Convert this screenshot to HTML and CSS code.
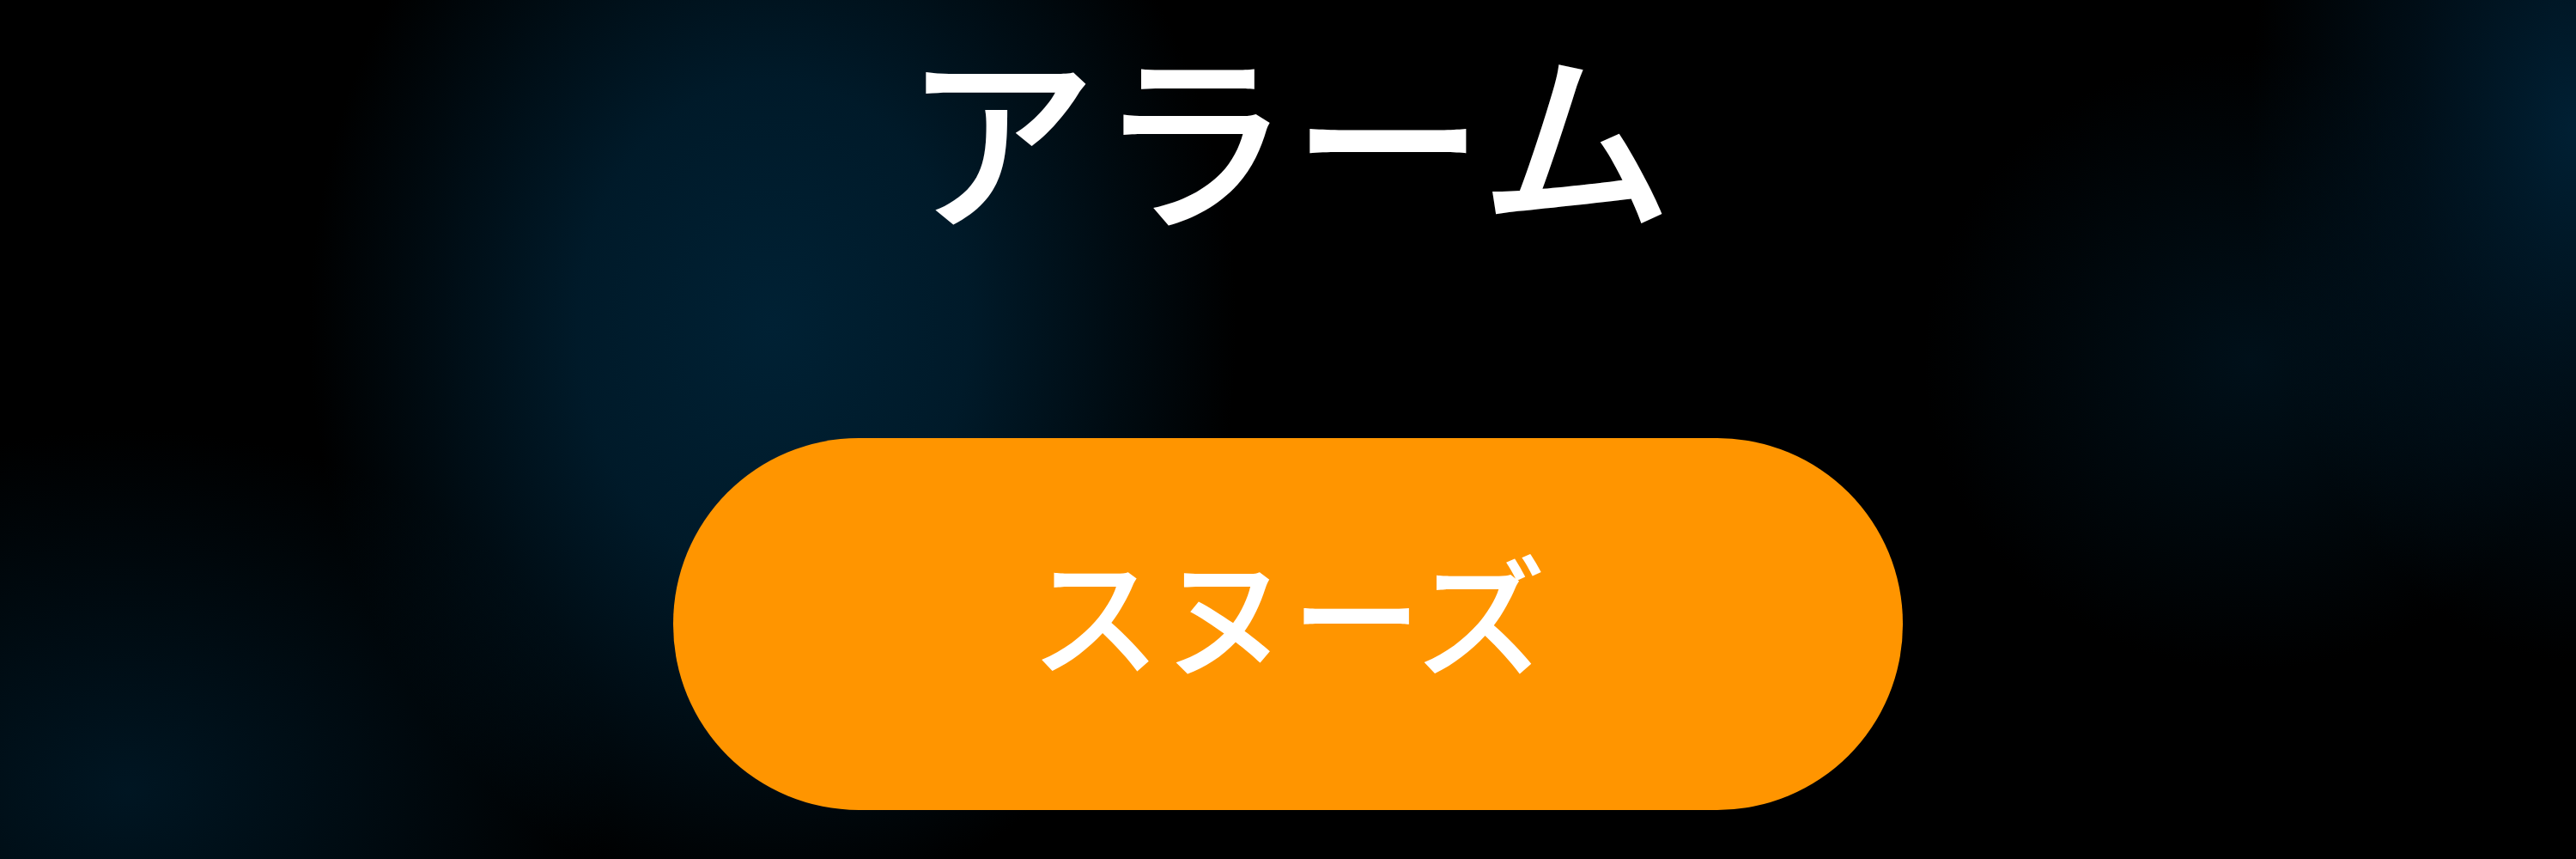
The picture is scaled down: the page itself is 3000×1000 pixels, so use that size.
FILE: index.html
```html
<!DOCTYPE html>
<html lang="ja">
<head>
<meta charset="utf-8">
<title>アラーム</title>
<link rel="stylesheet" href="styles.css">
</head>
<body>
<main class="screen">
  <h1 class="title">アラーム</h1>
  <button class="snooze" type="button">スヌーズ</button>
</main>
</body>
</html>
```

FILE: styles.css
```css
html, body {
  margin: 0;
  padding: 0;
  background: #000;
}
.screen {
  width: 3000px;
  height: 1000px;
  box-sizing: border-box;
  display: flex;
  flex-direction: column;
  align-items: center;
  padding-top: 3px;
  font-family: "Noto Sans CJK JP", "Noto Sans", sans-serif;
  background:
    radial-gradient(ellipse 540px 680px at 900px 380px, rgba(0, 33, 52, 1) 0%, rgba(0, 29, 46, 0.9) 42%, rgba(0, 20, 34, 0) 100%),
    radial-gradient(ellipse 380px 620px at 3000px 150px, rgba(0, 32, 52, 1) 0%, rgba(0, 24, 40, 0.6) 50%, rgba(0, 0, 0, 0) 100%),
    radial-gradient(ellipse 380px 360px at 2620px 420px, rgba(0, 20, 32, 0.8) 0%, rgba(0, 0, 0, 0) 100%),
    radial-gradient(ellipse 560px 420px at 150px 920px, rgba(0, 24, 38, 0.9) 0%, rgba(0, 0, 0, 0) 100%),
    #000;
}
.title {
  margin: 0;
  padding: 0 20px;
  font-size: 226px;
  line-height: 300px;
  font-weight: 500;
  color: #fff;
  letter-spacing: 0;
}
.snooze {
  margin-top: 207px;
  width: 1432px;
  height: 433px;
  border: none;
  border-radius: 216px;
  background: #ff9500;
  color: #fff;
  font-family: "Noto Sans CJK JP", "Noto Sans", sans-serif;
  font-size: 152px;
  line-height: 200px;
  font-weight: 500;
  display: flex;
  align-items: center;
  justify-content: center;
  padding: 0 0 34px 0;
  box-sizing: border-box;
}
```
